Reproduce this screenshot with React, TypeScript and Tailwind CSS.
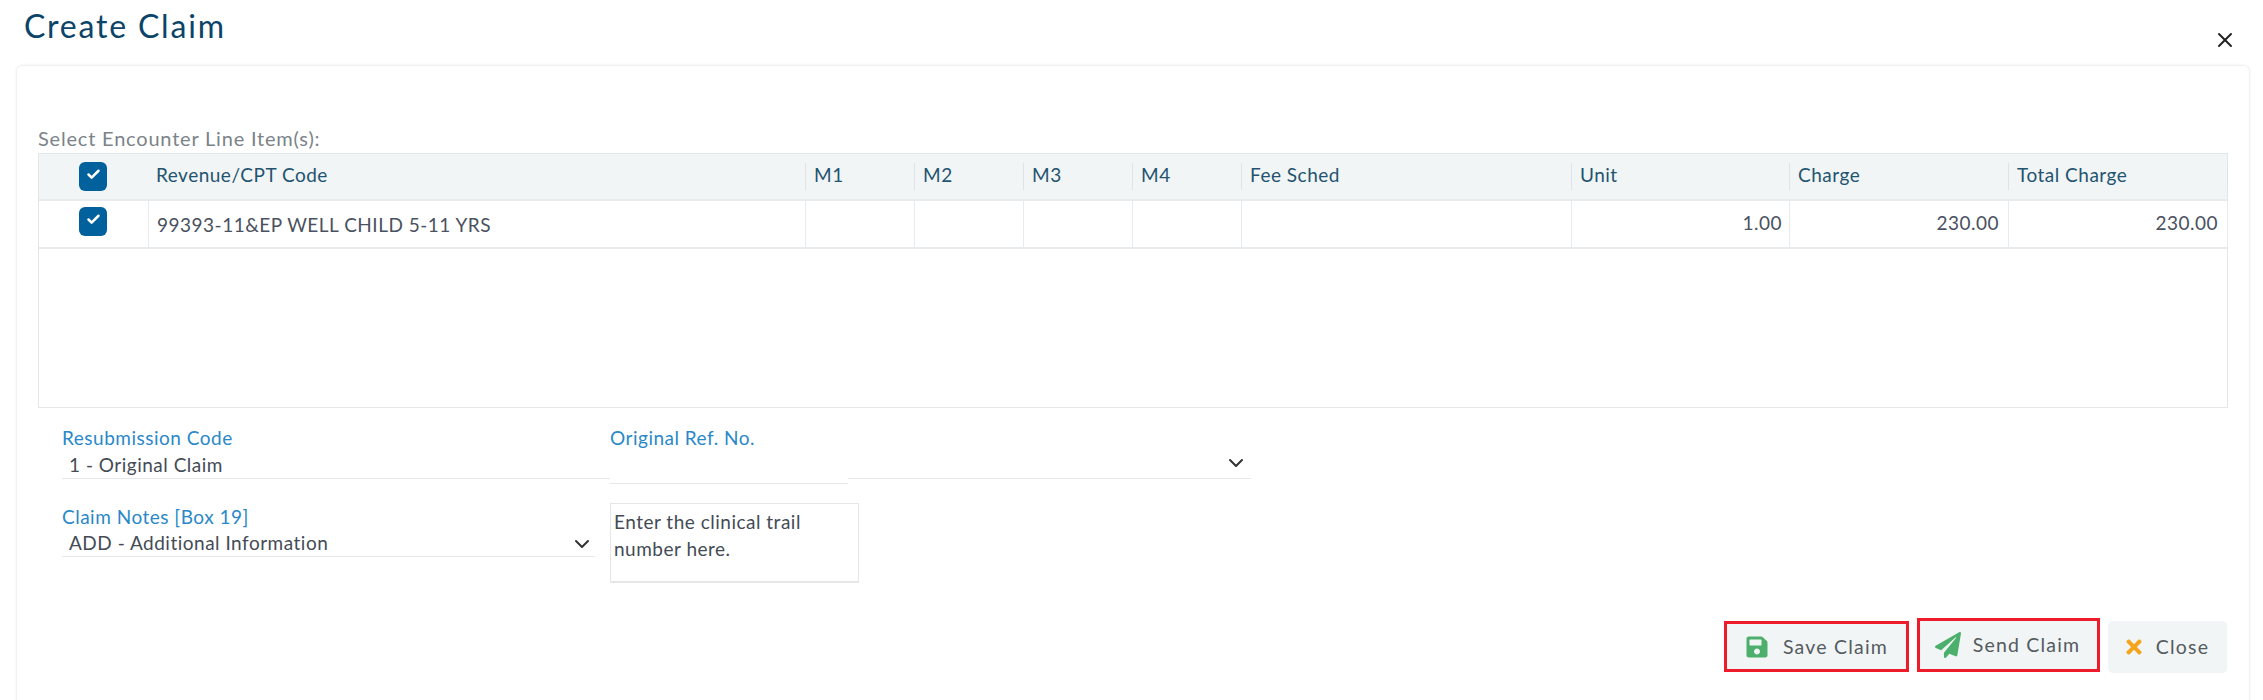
import React from 'react';
import { X, Check, ChevronDown } from 'lucide-react';
import { FaSave, FaPaperPlane, FaTimes } from 'react-icons/fa';

const GRID = 'grid grid-cols-[109px_657px_109px_109px_109px_109px_330px_218px_219px_220px]';

const headers = ['Revenue/CPT Code', 'M1', 'M2', 'M3', 'M4', 'Fee Sched', 'Unit', 'Charge', 'Total Charge'];

const Tick = () => (
  <span className="flex h-[29px] w-[28px] items-start justify-center rounded-[6px] bg-[#01619c] pt-[5px] text-white">
    <Check size={15} strokeWidth={4} />
  </span>
);

const App: React.FC = () => {
  return (
    <div className="flex h-[700px] w-[2263px] flex-col overflow-hidden bg-white font-['Lato',sans-serif] tracking-[0.5px]">
      <div className="flex h-[65px] shrink-0 justify-between pl-[24px] pr-[26px]">
        <h1 className="mt-[8px] text-[32px] leading-[36px] tracking-[1.8px] text-[#0b4468]">Create Claim</h1>
        <X size={24} strokeWidth={2} className="mt-[28px] text-[#222]" />
      </div>

      <div className="ml-[16px] mr-[13px] flex flex-1 flex-col rounded-t-[6px] border border-b-0 border-[#f1f1f1] pl-[21px] pr-[22px] pt-[59px] shadow-[0_0_3px_rgba(0,0,0,0.06)]">
        <div className="h-[28px] text-[20px] leading-[26px] tracking-[0.8px] text-[#7b8389]">Select Encounter Line Item(s):</div>

        <div className="h-[255px] w-[2190px] shrink-0 border border-[#e4e7e9]">
          <div className={`${GRID} h-[47px] items-center border-b-2 border-[#e8ebed] bg-[#f1f5f6] text-[19px] text-[#23536f]`}>
            <div className="flex justify-center pr-[1px]">
              <Tick />
            </div>
            {headers.map((h, i) => (
              <div
                key={h}
                className={`flex h-[27px] items-center pb-[2px] pl-[8px] ${i > 0 ? 'border-l border-[#dfe3e5]' : ''} ${i === headers.length - 1 ? 'border-r' : ''}`}
              >
                {h}
              </div>
            ))}
          </div>

          <div className={`${GRID} h-[48px] border-b-2 border-[#e8ebed] text-[19px] text-[#4a5160]`}>
            <div className="flex justify-center pr-[1px] pt-[6px]">
              <Tick />
            </div>
            <div className="flex items-center border-l border-[#e8ebed] pl-[8px] pt-[2px]">99393-11&amp;EP WELL CHILD 5-11 YRS</div>
            <div className="border-l border-[#e8ebed]" />
            <div className="border-l border-[#e8ebed]" />
            <div className="border-l border-[#e8ebed]" />
            <div className="border-l border-[#e8ebed]" />
            <div className="border-l border-[#e8ebed]" />
            <div className="flex items-center justify-end border-l border-[#e8ebed] pb-[2px] pr-[7px]">1.00</div>
            <div className="flex items-center justify-end border-l border-[#e8ebed] pb-[2px] pr-[9px]">230.00</div>
            <div className="flex items-center justify-end border-x border-[#e8ebed] pb-[2px] pr-[9px]">230.00</div>
          </div>
        </div>

        <div className="mt-[17px] flex pl-[24px]">
          <div className="w-[548px] shrink-0">
            <div className="h-[26px] text-[19px] leading-[26px] text-[#2a88c8]">Resubmission Code</div>
            <div className="h-[28px] border-b border-[#e8e8e8] pl-[7px] text-[19px] leading-[28px] text-[#444b55]">1 - Original Claim</div>
          </div>
          <div className="w-[238px] shrink-0">
            <div className="h-[26px] text-[19px] leading-[26px] text-[#2a88c8]">Original Ref. No.</div>
            <div className="h-[33px] border-b border-[#e8e8e8]" />
          </div>
          <div className="flex h-[54px] w-[403px] items-end justify-end border-b border-[#e8e8e8] pb-[3px] pr-[3px]">
            <ChevronDown size={24} strokeWidth={2} className="text-[#333]" />
          </div>
        </div>

        <div className="mt-[19px] flex pl-[24px]">
          <div className="w-[533px] shrink-0">
            <div className="mt-[1px] h-[26px] text-[19px] leading-[26px] text-[#2a88c8]">Claim Notes [Box 19]</div>
            <div className="flex h-[27px] items-center justify-between border-b border-[#e8e8e8] pl-[7px] pr-[1px] pt-[1px] text-[19px] text-[#444b55]">
              <span>ADD - Additional Information</span>
              <ChevronDown size={24} strokeWidth={2} className="text-[#333]" />
            </div>
          </div>
          <div className="ml-[15px] h-[80px] w-[249px] border border-b-2 border-[#e6e6e6] px-[3px] py-[4px] text-[19px] leading-[27px] text-[#444b55]">
            Enter the clinical trail number here.
          </div>
        </div>

        <div className="mt-[35px] flex items-end justify-end text-[19.5px] tracking-[1.2px] text-[#555b60]">
          <button className="flex h-[51px] w-[185px] items-center justify-center gap-[14px] border-[3px] border-[#ee1c2b] bg-[#f1f5f6]">
            <FaSave size={24} className="text-[#4caf6c]" />
            Save Claim
          </button>
          <button className="ml-[8px] flex h-[54px] w-[183px] items-center justify-center gap-[12px] border-[3px] border-[#ee1c2b] bg-[#f1f5f6] pr-[2px]">
            <FaPaperPlane size={26} className="text-[#4caf6c]" />
            Send Claim
          </button>
          <button className="ml-[8px] flex h-[51px] w-[119px] items-center justify-center gap-[11px] rounded-[5px] bg-[#f1f5f6] pr-[3px] shadow-[0_1px_1px_rgba(0,0,0,0.05)]">
            <FaTimes size={22} className="text-[#f5a41d]" />
            Close
          </button>
        </div>
      </div>
    </div>
  );
};

export default App;
